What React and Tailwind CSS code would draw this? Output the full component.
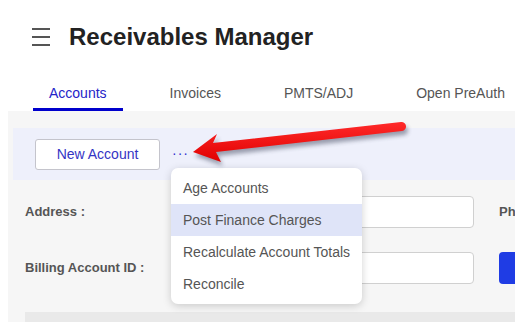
import { useState } from "react";

const tabs = ["Accounts", "Invoices", "PMTS/ADJ", "Open PreAuth"];
const menuItems = ["Age Accounts", "Post Finance Charges", "Recalculate Account Totals", "Reconcile"];

function Arrow() {
    return (
        <svg className="absolute left-0 top-0 pointer-events-none" width="515" height="322">
            <defs>
                <filter id="blur" x="-20%" y="-50%" width="140%" height="200%">
                    <feGaussianBlur stdDeviation="2" />
                </filter>
                <linearGradient id="red" x1="0" y1="0" x2="0" y2="1">
                    <stop offset="0" stopColor="#ff2a2a" />
                    <stop offset="1" stopColor="#e00000" />
                </linearGradient>
            </defs>
            <path
                d="M193 152 L217 134 L213 143 L401 122 A4.5 4.5 0 0 1 402 131 L216 152 L221 162 Z"
                fill="#303850"
                opacity="0.45"
                transform="translate(2 4)"
                filter="url(#blur)"
            />
            <path
                d="M193 152 L217 134 L213 143 L401 122 A4.5 4.5 0 0 1 402 131 L216 152 L221 162 Z"
                fill="url(#red)"
            />
        </svg>
    );
}

export default function App() {
    const [active] = useState(0);

    return (
        <div className="relative w-[515px] h-[322px] overflow-hidden bg-white font-['Liberation_Sans',Arial,sans-serif]">
            {/* header */}
            <div className="flex items-center h-[74px] pl-[32px]">
                <div className="flex flex-col gap-[6px] w-[18px]">
                    <div className="h-[2px] bg-[#555]" />
                    <div className="h-[2px] bg-[#555]" />
                    <div className="h-[2px] bg-[#555]" />
                </div>
                <h1 className="ml-[19px] text-[24px] font-bold text-[#222]">Receivables Manager</h1>
            </div>

            {/* tabs */}
            <div className="flex pl-[33px] h-[37px]">
                {tabs.map((t, i) => (
                    <div
                        key={t}
                        className={
                            i === active
                                ? "shrink-0 whitespace-nowrap px-[16px] pt-[9px] text-[14px] text-[#2424c8] border-b-[3px] border-[#0000cc]"
                                : "shrink-0 whitespace-nowrap ml-[31px] px-[16px] pt-[9px] text-[14px] text-[#555]"
                        }
                    >
                        {t}
                    </div>
                ))}
            </div>

            {/* panel */}
            <div className="ml-[8px] bg-[#f6f6f6] h-[211px] pt-[17px]">
                <div className="ml-[5px] h-[52px] bg-[#eef0fb] flex items-center pl-[22px]">
                    <button className="w-[125px] h-[31px] bg-white border border-[#c4c4cc] rounded-[3px] text-[14px] text-[#3434c4]">
                        New Account
                    </button>
                    <span className="ml-[12px] text-[14px] text-[#3434d0] tracking-[1px] -mt-[2px]">···</span>
                </div>

                <div className="pl-[17px] pt-[16px]">
                    <div className="flex items-center h-[32px]">
                        <div className="shrink-0 w-[150px] text-[13px] font-bold text-[#555]">Address :</div>
                        <div className="shrink-0 w-[299px] h-[32px] bg-white border border-[#d0d0d0] rounded-[4px]" />
                        <div className="shrink-0 whitespace-nowrap ml-[25px] text-[13px] font-bold text-[#555]">Phone</div>
                    </div>
                    <div className="flex items-center h-[32px] mt-[24px]">
                        <div className="shrink-0 w-[150px] text-[13px] font-bold text-[#555]">Billing Account ID :</div>
                        <div className="shrink-0 w-[299px] h-[32px] bg-white border border-[#d0d0d0] rounded-[4px]" />
                        <div className="shrink-0 ml-[25px] w-[60px] h-[32px] bg-[#1f3ce4] rounded-[4px]" />
                    </div>
                    <div className="mt-[28px] h-[20px] bg-[#e9e9e9]" />
                </div>
            </div>

            {/* dropdown */}
            <div className="absolute left-[171px] top-[168px] w-[191px] py-[4px] bg-white rounded-[7px] shadow-[0_2px_8px_rgba(0,0,0,0.18)]">
                {menuItems.map((m, i) => (
                    <div
                        key={m}
                        className={
                            "h-[32px] flex items-center px-[12px] whitespace-nowrap text-[14px] text-[#555] " +
                            (i === 1 ? "bg-[#dfe4f8]" : "")
                        }
                    >
                        {m}
                    </div>
                ))}
            </div>

            <Arrow />
        </div>
    );
}
